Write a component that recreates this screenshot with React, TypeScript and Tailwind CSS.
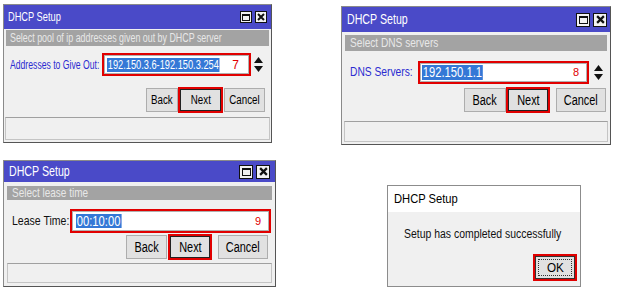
import React from "react";

function S({ children, cls }: { children: React.ReactNode; cls: string }) {
  return <span className={"inline-block whitespace-nowrap " + cls}>{children}</span>;
}

function TitleButtons({ big }: { big?: boolean }) {
  const box = big
    ? "w-[14px] h-[14px] bg-[#f2f2f2] border border-[#111] flex items-center justify-center"
    : "w-[12px] h-[12px] bg-[#f2f2f2] border border-[#111] flex items-center justify-center";
  return (
    <div className="flex gap-[3px]">
      <div className={box}>
        <div className={big ? "w-[9px] h-[8px] border border-[#111] border-t-2" : "w-[8px] h-[7px] border border-[#111] border-t-2"} />
      </div>
      <div className={box}>
        <svg width={big ? 9 : 8} height={big ? 9 : 8} viewBox="0 0 8 8">
          <path d="M1 1L7 7M7 1L1 7" stroke="#111" strokeWidth="2" />
        </svg>
      </div>
    </div>
  );
}

function Spinner() {
  return (
    <svg width="9" height="15" viewBox="0 0 9 15">
      <path d="M4.5 0L9 6H0Z" fill="#111" />
      <path d="M0 9H9L4.5 15Z" fill="#111" />
    </svg>
  );
}

export default function App() {
  return (
    <div className="relative w-[617px] h-[294px] bg-white overflow-hidden font-['Liberation_Sans',Arial,sans-serif]">
      {/* Window 1 */}
      <div className="absolute left-[3px] top-[4px] w-[269px] h-[139px] border border-[#8a8a8a] border-r-[#555] border-b-[#555] bg-[#f0f0f0] flex flex-col">
        <div className="h-[24px] bg-[#4a4ac8] flex items-center justify-between pl-[4px] pr-[4px] text-white text-[12.5px]">
          <S cls="origin-left scale-x-[0.74]">DHCP Setup</S>
          <TitleButtons />
        </div>
        <div className="mx-[2px] mt-[1px] h-[16px] bg-[#a3a3a3] text-[#e8e8e8] text-[12px] pl-[4px] flex items-center overflow-hidden">
          <S cls="origin-left scale-x-[0.74]">Select pool of ip addresses given out by DHCP server</S>
        </div>
        <div className="mt-[7px] h-[23px] flex items-center">
          <div className="w-[98px] shrink-0 pl-[6px] text-[#2b2bd0] text-[12px]">
            <S cls="origin-left scale-x-[0.72]">Addresses to Give Out:</S>
          </div>
          <div className="w-[149px] shrink-0 h-[23px] border-2 border-[#e10000] flex">
            <div className="flex-1 min-w-0 border border-[#b0b0b0] bg-white flex items-center pl-[2px]">
              <div className="w-[112px] shrink-0 flex">
                <S cls="origin-left scale-x-[0.74] bg-[#3478d6] text-white text-[12.5px] leading-[14px] px-[1px]">192.150.3.6-192.150.3.254</S>
              </div>
              <span className="ml-auto pr-[9px] text-[#e00000] text-[12px]">7</span>
            </div>
          </div>
          <div className="ml-[3px]">
            <Spinner />
          </div>
        </div>
        <div className="mt-[11px] h-[26px] flex items-center justify-end pr-[6px] text-[12.5px] text-black">
          <div className="w-[32px] h-[24px] bg-[#e1e1e1] border border-[#adadad] flex items-center justify-center">
            <S cls="origin-center scale-x-[0.78]">Back</S>
          </div>
          <div className="w-[45px] h-[26px] border-2 border-[#e10000] flex">
            <div className="flex-1 bg-[#e1e1e1] border border-[#222] flex items-center justify-center">
              <S cls="origin-center scale-x-[0.78]">Next</S>
            </div>
          </div>
          <div className="w-[41px] h-[24px] ml-[1px] bg-[#e1e1e1] border border-[#adadad] flex items-center justify-center">
            <S cls="origin-center scale-x-[0.78]">Cancel</S>
          </div>
        </div>
        <div className="mt-[4px] mx-[1px] h-[23px] border border-[#c4c4c4] border-t-[#a0a0a0] bg-[#f0f0f0]" />
      </div>

      {/* Window 2 */}
      <div className="absolute left-[341px] top-[6px] w-[270px] h-[139px] border border-[#8a8a8a] border-r-[#555] border-b-[#555] bg-[#f0f0f0] flex flex-col">
        <div className="h-[25px] bg-[#4a4ac8] flex items-center justify-between pl-[5px] pr-[3px] text-white text-[14px]">
          <S cls="origin-left scale-x-[0.76]">DHCP Setup</S>
          <TitleButtons big />
        </div>
        <div className="mx-[3px] mt-[3px] h-[16px] bg-[#a3a3a3] text-[#e8e8e8] text-[13.5px] pl-[5px] flex items-center">
          <S cls="origin-left scale-x-[0.75]">Select DNS servers</S>
        </div>
        <div className="mt-[10px] h-[23px] flex items-center">
          <div className="w-[76px] shrink-0 pl-[8px] text-[#2b2bd0] text-[13.5px]">
            <S cls="origin-left scale-x-[0.76]">DNS Servers:</S>
          </div>
          <div className="w-[171px] shrink-0 h-[23px] border-2 border-[#e10000] flex">
            <div className="flex-1 min-w-0 border border-[#b0b0b0] bg-white flex items-center pl-[1px]">
              <div className="w-[60px] shrink-0 flex">
                <S cls="origin-left scale-x-[0.8] bg-[#3478d6] text-white text-[14px] leading-[15px] px-[1px]">192.150.1.1</S>
              </div>
              <span className="ml-auto pr-[7px] text-[#e00000] text-[11px]">8</span>
            </div>
          </div>
          <div className="ml-[5px]">
            <Spinner />
          </div>
        </div>
        <div className="mt-[3px] h-[26px] flex items-center justify-end pr-[4px] text-[14px] text-black">
          <div className="w-[42px] h-[24px] bg-[#e1e1e1] border border-[#adadad] flex items-center justify-center">
            <S cls="origin-center scale-x-[0.78]">Back</S>
          </div>
          <div className="w-[44px] h-[26px] border-2 border-[#e10000] flex">
            <div className="flex-1 bg-[#e1e1e1] border border-[#222] flex items-center justify-center">
              <S cls="origin-center scale-x-[0.78]">Next</S>
            </div>
          </div>
          <div className="w-[50px] h-[24px] ml-[6px] bg-[#e1e1e1] border border-[#adadad] flex items-center justify-center">
            <S cls="origin-center scale-x-[0.78]">Cancel</S>
          </div>
        </div>
        <div className="mt-[8px] mx-[2px] h-[21px] border border-[#c4c4c4] border-t-[#a0a0a0] bg-[#f0f0f0]" />
      </div>

      {/* Window 3 */}
      <div className="absolute left-[3px] top-[160px] w-[273px] h-[127px] border border-[#8a8a8a] border-r-[#555] border-b-[#555] bg-[#f0f0f0] flex flex-col">
        <div className="h-[21px] bg-[#4a4ac8] flex items-center justify-between pl-[5px] pr-[5px] text-white text-[14px]">
          <S cls="origin-left scale-x-[0.76]">DHCP Setup</S>
          <TitleButtons big />
        </div>
        <div className="mx-[3px] mt-[4px] h-[14px] bg-[#a3a3a3] text-[#e8e8e8] text-[13.5px] pl-[5px] flex items-center">
          <S cls="origin-left scale-x-[0.74]">Select lease time</S>
        </div>
        <div className="mt-[9px] h-[24px] flex items-center">
          <div className="w-[66px] shrink-0 pl-[8px] text-[#111] text-[13.5px]">
            <S cls="origin-left scale-x-[0.78]">Lease Time:</S>
          </div>
          <div className="w-[201px] shrink-0 h-[24px] border-2 border-[#e10000] flex">
            <div className="flex-1 min-w-0 border border-[#b0b0b0] bg-white flex items-center pl-[3px]">
              <div className="w-[46px] shrink-0 flex">
                <S cls="origin-left scale-x-[0.8] bg-[#3478d6] text-white text-[14px] leading-[14px] px-[1px]">00:10:00</S>
              </div>
              <span className="ml-auto pr-[7px] text-[#e00000] text-[11px]">9</span>
            </div>
          </div>
        </div>
        <div className="mt-[1px] h-[26px] flex items-center justify-end pr-[7px] text-[14px] text-black">
          <div className="w-[41px] h-[24px] bg-[#e1e1e1] border border-[#adadad] flex items-center justify-center">
            <S cls="origin-center scale-x-[0.78]">Back</S>
          </div>
          <div className="w-[44px] h-[26px] ml-[1px] border-2 border-[#e10000] flex">
            <div className="flex-1 bg-[#e1e1e1] border border-[#222] flex items-center justify-center">
              <S cls="origin-center scale-x-[0.78]">Next</S>
            </div>
          </div>
          <div className="w-[50px] h-[24px] ml-[6px] bg-[#e1e1e1] border border-[#adadad] flex items-center justify-center">
            <S cls="origin-center scale-x-[0.78]">Cancel</S>
          </div>
        </div>
        <div className="mt-[3px] mx-[3px] h-[20px] border border-[#c4c4c4] border-t-[#a0a0a0] bg-[#f0f0f0]" />
      </div>

      {/* Window 4 */}
      <div className="absolute left-[387px] top-[185px] w-[194px] h-[102px] border border-[#8c8c8c] bg-[#f0f0f0] flex flex-col">
        <div className="h-[26px] bg-white flex items-center pl-[6px] text-[13px] text-black">
          <S cls="origin-left scale-x-[0.86]">DHCP Setup</S>
        </div>
        <div className="flex-1 flex flex-col">
          <div className="mt-[14px] pl-[16px] h-[16px] flex items-center text-[12px] text-[#111]">
            <S cls="origin-left scale-x-[0.87]">Setup has completed successfully</S>
          </div>
          <div className="mt-auto mb-[5px] pr-[3px] flex justify-end">
            <div className="w-[44px] h-[27px] border-2 border-[#e10000] flex">
              <div className="flex-1 bg-[#e1e1e1] border border-[#333] p-[2px] flex">
                <div className="flex-1 border border-dotted border-[#333] flex items-center justify-center text-[13px] text-black">
                  <S cls="origin-center scale-x-[0.9]">OK</S>
                </div>
              </div>
            </div>
          </div>
        </div>
      </div>
    </div>
  );
}
